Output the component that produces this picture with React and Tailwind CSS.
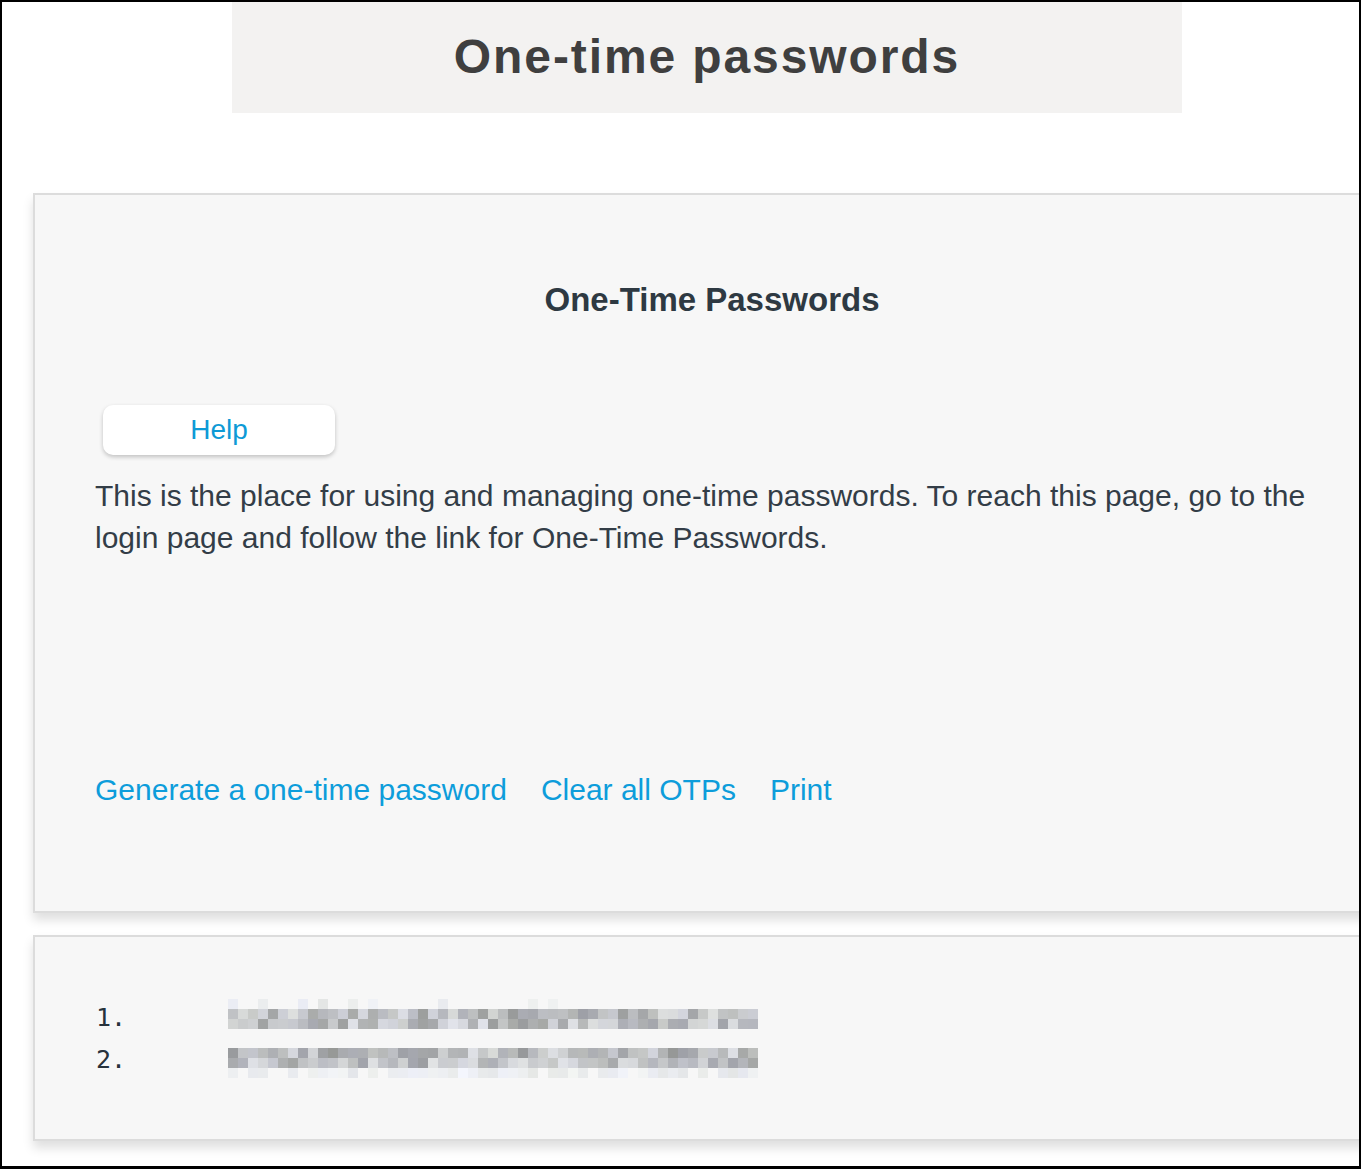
import React from "react";

const seeded = (seed) => {
  let s = seed;
  return () => {
    s = (s * 16807) % 2147483647;
    return (s - 1) / 2147483646;
  };
};

const Pixelated = ({ seed, faintTop, faintBottom }) => {
  const rnd = seeded(seed);
  const cols = 53;
  const rects = [];
  const shade = (min, max) => {
    const v = Math.round(min + rnd() * (max - min));
    const b = Math.min(255, v + Math.round(rnd() * 10));
    return `rgb(${v},${v + 2},${b})`;
  };
  const top = faintTop ? 10 : 0;
  for (let c = 0; c < cols; c++) {
    if (faintTop && rnd() < 0.12) rects.push(<rect key={`t${c}`} x={c * 10} y={0} width={10} height={10} fill={shade(228, 240)} />);
    rects.push(<rect key={`a${c}`} x={c * 10} y={top} width={10} height={10} fill={shade(150, 222)} />);
    rects.push(<rect key={`b${c}`} x={c * 10} y={top + 10} width={10} height={10} fill={shade(155, 225)} />);
    if (faintBottom && rnd() < 0.8) rects.push(<rect key={`f${c}`} x={c * 10} y={top + 20} width={10} height={10} fill={shade(228, 244)} />);
  }
  const h = top + 20 + (faintBottom ? 10 : 0);
  return (
    <svg width="530" height={h} viewBox={`0 0 530 ${h}`} className="block" shapeRendering="crispEdges">
      {rects}
    </svg>
  );
};

const OtpRow = ({ n, seed, first }) => (
  <div className="flex h-[42px] items-start">
    <span className="w-[132px] pt-[5px] text-[25px] leading-[30px] text-[#27323c] font-['DejaVu_Sans_Mono',monospace]">{n}.</span>
    <div className={first ? "pt-[1px]" : "pt-[8px]"}>
      <Pixelated seed={seed} faintTop={first} faintBottom={!first} />
    </div>
  </div>
);

export default function App() {
  return (
    <div className="w-[1361px] h-[1169px] overflow-hidden border-2 border-b-[3px] border-black bg-white font-['Liberation_Sans',Arial,sans-serif]">
      <div className="w-[1424px]">
        <div className="ml-[230px] flex h-[111px] w-[950px] items-center justify-center bg-[#f3f2f1]">
          <h1 className="pb-[2px] text-[48px] font-bold tracking-[1.9px] text-[#3f3f3f]">One-time passwords</h1>
        </div>

        <div className="ml-[31px] mt-[80px] h-[720px] w-[1358px] border-2 border-[#dcdcdc] bg-[#f7f7f7] pt-[85px] shadow-[0_7px_10px_rgba(0,0,0,0.13)]">
          <h2 className="text-center text-[33px] font-bold leading-[40px] text-[#2e3942]">One-Time Passwords</h2>
          <div className="pl-[60px] pr-[60px]">
            <button className="ml-[8px] mt-[85px] flex h-[50px] w-[232px] items-center justify-center rounded-[10px] bg-white text-[28px] text-[#0e9ad6] shadow-[0_2px_4px_rgba(0,0,0,0.22)]">
              Help
            </button>
            <p className="mt-[20px] text-[30px] leading-[42px] text-[#333d47]">
              This is the place for using and managing one-time passwords. To reach this page, go to the login page and follow the link for One-Time Passwords.
            </p>
            <div className="mt-[211px] flex gap-[34px] text-[30px] leading-[40px] text-[#0d9ddb]">
              <a>Generate a one-time password</a>
              <a>Clear all OTPs</a>
              <a>Print</a>
            </div>
          </div>
        </div>

        <div className="ml-[31px] mt-[22px] h-[206px] w-[1358px] border-2 border-[#dcdcdc] bg-[#f7f7f7] pl-[61px] pt-[61px] shadow-[0_7px_10px_rgba(0,0,0,0.13)]">
          <OtpRow n={1} seed={917} first />
          <OtpRow n={2} seed={4451} />
        </div>
      </div>
    </div>
  );
}
